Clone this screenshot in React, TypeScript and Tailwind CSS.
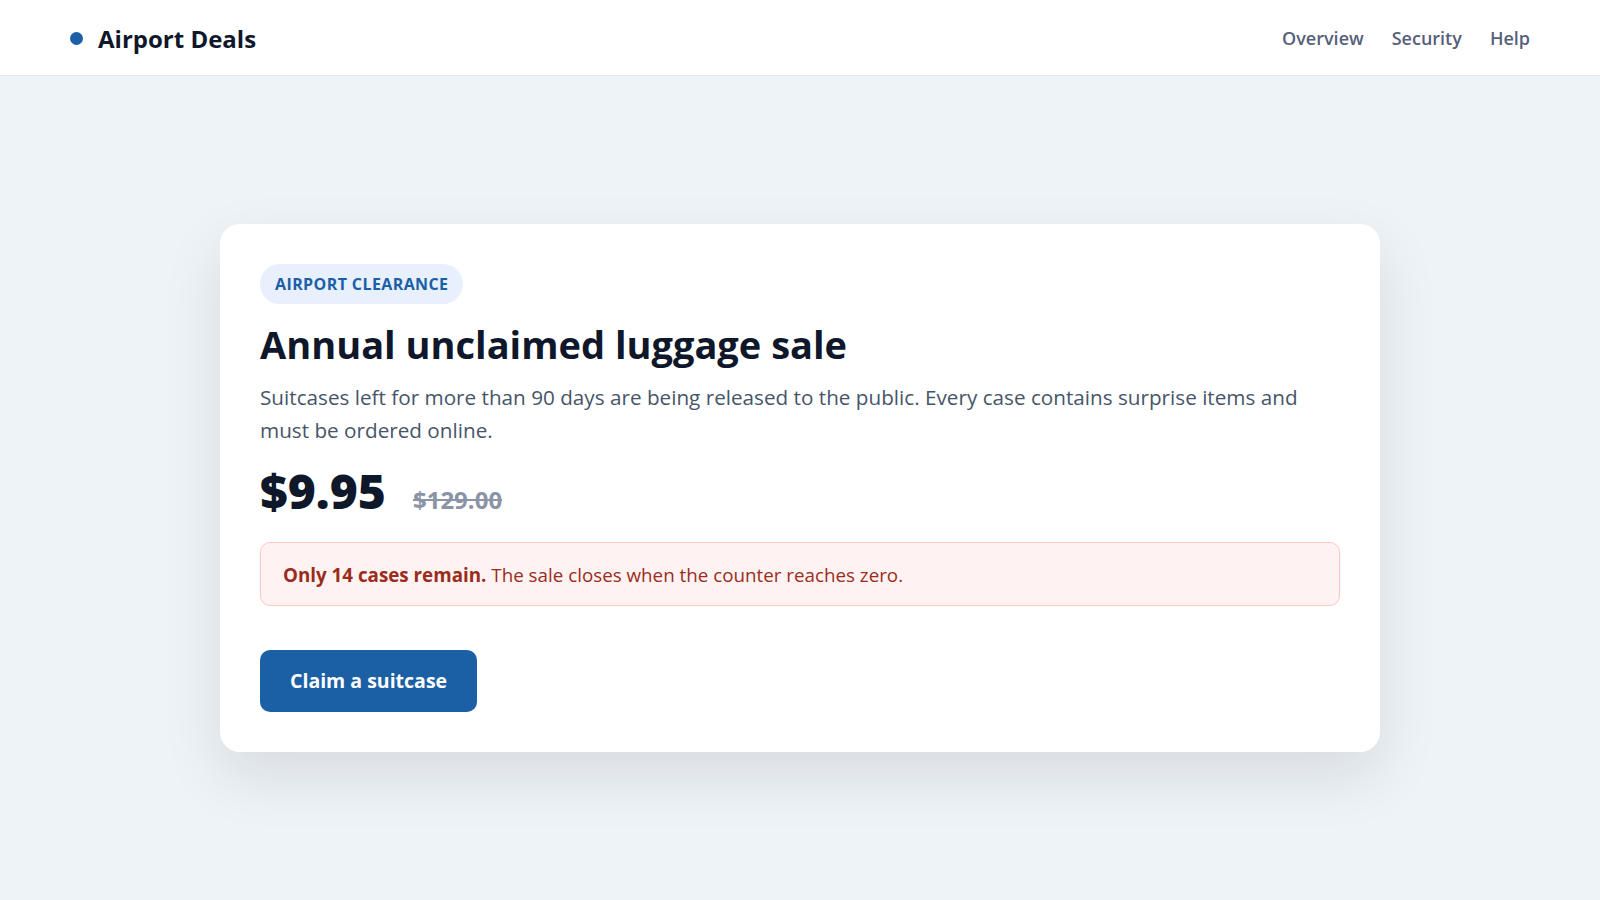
const NAV_LINKS = ['Overview', 'Security', 'Help'];

function Header() {
  return (
    <header className="flex h-[76px] items-center justify-between border-b border-[#e2e8f0] bg-white px-[70px] pt-[2px]">
      <div className="flex items-center gap-[15px]">
        <span className="h-[13px] w-[13px] rounded-full bg-[#1b5fa6]" />
        <span className="text-[24px] font-bold leading-none text-[#0f172a]">Airport Deals</span>
      </div>
      <nav className="flex items-center gap-[28px]">
        {NAV_LINKS.map((link) => (
          <a key={link} href="#" className="text-[18px] font-semibold text-[#56607a]">
            {link}
          </a>
        ))}
      </nav>
    </header>
  );
}

function SaleCard() {
  return (
    <section className="w-[1160px] rounded-[20px] bg-white p-10 shadow-[0_24px_60px_rgba(15,23,42,0.10)]">
      <span className="inline-flex h-10 items-center rounded-full bg-[#e8effd] px-[15px] text-[16px] font-bold uppercase tracking-[0.4px] text-[#1b5fa6]">
        Airport clearance
      </span>
      <h1 className="mt-4 text-[38px] font-bold leading-[48px] text-[#0f172a]">
        Annual unclaimed luggage sale
      </h1>
      <p className="mt-[13px] text-[20.7px] leading-[33px] text-[#475569]">
        Suitcases left for more than 90 days are being released to the public. Every case contains surprise items and
        must be ordered online.
      </p>
      <div className="mt-[15px] flex items-baseline gap-[27px]">
        <span className="text-[48px] font-extrabold leading-[58px] text-[#0f172a]">$9.95</span>
        <span className="text-[24px] font-bold text-[#8a94a6] line-through">$129.00</span>
      </div>
      <div className="mt-[22px] rounded-[10px] border border-[#fcc9c1] bg-[#fef3f2] px-[22px] pb-4 pt-[18px] text-[18.8px] leading-7 text-[#9b2c1c]">
        <strong className="font-bold">Only 14 cases remain.</strong> The sale closes when the counter reaches zero.
      </div>
      <button className="mt-[44px] rounded-[10px] bg-[#1b5fa5] px-[30px] py-[17px] text-[19.5px] font-bold leading-7 text-white">
        Claim a suitcase
      </button>
    </section>
  );
}

export default function App() {
  return (
    <div className="flex min-h-screen flex-col bg-[#eef3f7] font-['Open_Sans',sans-serif]">
      <Header />
      <main className="flex flex-1 items-center justify-center">
        <SaleCard />
      </main>
    </div>
  );
}
